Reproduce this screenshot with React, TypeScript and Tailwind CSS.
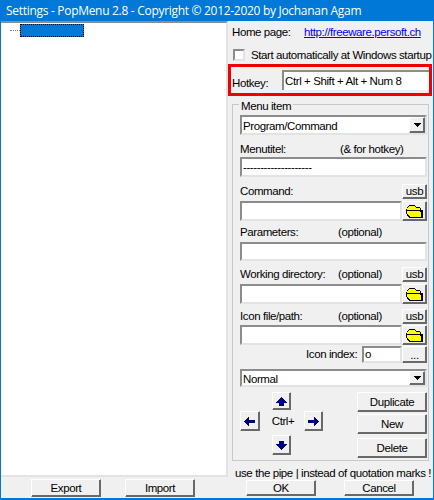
const raised =
  "border border-t-white border-l-white border-r-[#696969] border-b-[#696969] shadow-[inset_-1px_-1px_0_#696969] bg-[#f0f0f0] flex items-center justify-center";
const sunken =
  "border-2 border-t-[#8c8c8c] border-l-[#8c8c8c] border-r-[#e3e3e3] border-b-[#e3e3e3] bg-white";

function FolderIcon() {
  return (
    <svg width="17" height="13" viewBox="0 0 17 13" shapeRendering="crispEdges">
      <path d="M3 0h6v1h1v1h4v1h1v2h2v8H3v-1H2v-1H1V9H0V4h1V2h1V1h1z" fill="#000" />
      <path d="M3 1h6v1h1v1h4v2H1V3h1V2h1z" fill="#ffff00" />
      <path d="M1 6h13v1h1v5H4v-1H3v-1H2V9H1z" fill="#ffff00" />
    </svg>
  );
}

function Arrow({ dir }: { dir: "up" | "down" | "left" | "right" }) {
  if (dir === "up" || dir === "down") {
    return (
      <svg className={dir === "down" ? "rotate-180" : ""} width="11" height="9" viewBox="0 0 11 9" shapeRendering="crispEdges">
        <path d="M5 0h1v1h1v1h1v1h1v1h1v1h1v1H8v3H3V6H0V5h1V4h1V3h1V2h1V1h1z" fill="#000080" />
      </svg>
    );
  }
  return (
    <svg className={dir === "right" ? "rotate-180" : ""} width="11" height="9" viewBox="0 0 11 9" shapeRendering="crispEdges">
      <path d="M4 0h1v3h6v3H5v3H4V8H3V7H2V6H1V5H0V4h1V3h1V2h1V1h1z" fill="#000080" />
    </svg>
  );
}

function Caret() {
  return (
    <svg width="7" height="4" viewBox="0 0 7 4" shapeRendering="crispEdges">
      <path d="M0 0h7v1H6v1H5v1H4v1H3V3H2V2H1V1H0z" fill="#000" />
    </svg>
  );
}

function Select({ value, height }: { value: string; height: string }) {
  return (
    <div className={`${sunken} ${height} w-full flex items-center justify-between`}>
      <span className="pl-[1px] pt-[1px]">{value}</span>
      <div className={`${raised} w-[16px] h-full`}>
        <Caret />
      </div>
    </div>
  );
}

function Usb() {
  return <div className={`${raised} w-[25px] h-[15px] pb-[1px]`}>usb</div>;
}

function FileRow({ mt }: { mt: string }) {
  return (
    <div className={`flex ${mt}`}>
      <div className={`${sunken} h-[20px] w-[162px]`} />
      <div className={`${raised} w-[25px] h-[20px] shrink-0`}>
        <FolderIcon />
      </div>
    </div>
  );
}

function LabelRow({
  label,
  optional,
  usb,
  mt,
}: {
  label: string;
  optional?: boolean;
  usb?: boolean;
  mt: string;
}) {
  const offset = usb ? "pb-[1px]" : "pt-[1px]";
  return (
    <div className={`flex items-center h-[15px] ${mt}`}>
      <span className={`w-[98px] shrink-0 whitespace-nowrap ${offset}`}>{label}</span>
      {optional && <span className={`whitespace-nowrap ${offset}`}>(optional)</span>}
      {usb && (
        <div className="ml-auto">
          <Usb />
        </div>
      )}
    </div>
  );
}

function ActionButton({ label, mt }: { label: string; mt?: string }) {
  return <div className={`${raised} w-[70px] h-[20px] ${mt ?? ""}`}>{label}</div>;
}

function ArrowButton({ dir, className }: { dir: "up" | "down" | "left" | "right"; className?: string }) {
  return (
    <div className={`${raised} ${className ?? ""}`}>
      <Arrow dir={dir} />
    </div>
  );
}

export default function App() {
  return (
    <div className="w-[434px] h-[500px] overflow-hidden flex flex-col bg-[#f0f0f0] text-black text-[11.5px] tracking-[-0.4px] leading-[14px] font-['Liberation_Sans',Arial,sans-serif] border-b-2 border-[#0078d7]">
      <div className="h-[21px] shrink-0 bg-[#0078d7] text-white pl-[6px] text-[12px] tracking-[-0.3px] leading-[21px] font-['Open_Sans',sans-serif] whitespace-nowrap">
        Settings - PopMenu 2.8 - Copyright © 2012-2020 by Jochanan Agam
      </div>
      <div className="flex-1 min-h-0 flex border-l border-r border-[#0078d7]">
        <div className="w-[227px] shrink-0 flex flex-col">
          <div className="h-[456px] border-t-2 border-t-[#8c8c8c] border-b-2 border-b-[#e3e3e3] border-r-2 border-r-[#e3e3e3] bg-white pt-[1px] shrink-0">
            <div className="flex items-center pl-[9px]">
              <div className="w-[10px] border-t border-dotted border-[#808080]" />
              <div className="w-[64px] h-[13px] bg-[#0078d7] border border-dotted border-black" />
            </div>
          </div>
          <div className="flex pl-[30px] pt-[2px] gap-[24px]">
            <div className={`${raised} w-[70px] h-[18px]`}>Export</div>
            <div className={`${raised} w-[70px] h-[18px]`}>Import</div>
          </div>
        </div>

        <div className="flex-1 min-w-0 flex flex-col">
          <div className="flex items-center h-[16px] mt-[3px] ml-[4px] whitespace-nowrap">
            <span className="w-[72px] shrink-0">Home page:</span>
            <span className="text-[#0000ff] underline">http://freeware.persoft.ch</span>
          </div>
          <div className="flex items-center h-[14px] mt-[8px] ml-[5px] whitespace-nowrap">
            <div className={`${sunken} w-[12px] h-[12px] shrink-0`} />
            <span className="ml-[6px]">Start automatically at Windows startup</span>
          </div>
          <div className="h-[32px] mt-[2px] w-[204px] border-[3px] border-[#f00000] flex items-center">
            <span className="ml-[1px] mt-[6px] w-[50px] shrink-0">Hotkey:</span>
            <div className="flex-1 h-[20px] border-t-2 border-l-2 border-t-[#8c8c8c] border-l-[#8c8c8c] bg-white pl-[1px] pt-[1px] leading-[16px]">
              Ctrl + Shift + Alt + Num 8
            </div>
          </div>

          <div className="relative mt-[8px] ml-[4px] w-[197px] h-[357px] border border-[#c8c8c8] pt-[10px] pl-[7px] pr-[1px]">
            <span className="absolute -top-[6px] left-[6px] px-[2px] bg-[#f0f0f0]">Menu item</span>
            <Select value="Program/Command" height="h-[20px]" />

            <div className="flex h-[14px] mt-[6px] pt-[1px] whitespace-nowrap">
              <span className="w-[100px] shrink-0">Menutitel:</span>
              <span>(&amp; for hotkey)</span>
            </div>
            <div className={`${sunken} h-[20px] mt-[2px] leading-[16px] pl-[1px] overflow-hidden`}>
              --------------------
            </div>

            <LabelRow label="Command:" usb mt="mt-[7px]" />
            <FileRow mt="mt-[2px]" />

            <LabelRow label="Parameters:" optional mt="mt-[3px]" />
            <div className={`${sunken} h-[19px] mt-[3px]`} />

            <LabelRow label="Working directory:" optional usb mt="mt-[6px]" />
            <FileRow mt="mt-[2px]" />

            <LabelRow label="Icon file/path:" optional usb mt="mt-[5px]" />
            <FileRow mt="mt-[1px]" />

            <div className="flex items-center h-[17px] mt-[1px] whitespace-nowrap">
              <span className="ml-[66px] w-[56px] shrink-0 pb-[2px]">Icon index:</span>
              <div className={`${sunken} w-[40px] h-[17px] leading-[13px] pl-[1px] shrink-0`}>o</div>
              <div className={`${raised} w-[25px] h-[17px]`}>...</div>
            </div>

            <div className="mt-[6px]">
              <Select value="Normal" height="h-[18px]" />
            </div>

            <div className="flex justify-between mt-[5px]">
              <div className="w-[83px] h-[64px] flex flex-col">
                <ArrowButton dir="up" className="w-[19px] h-[18px] ml-[32px]" />
                <div className="flex items-center mt-[1px] h-[20px]">
                  <ArrowButton dir="left" className="w-[20px] h-[20px]" />
                  <span className="ml-[12px] w-[33px] whitespace-nowrap">Ctrl+</span>
                  <ArrowButton dir="right" className="w-[19px] h-[20px]" />
                </div>
                <ArrowButton dir="down" className="w-[19px] h-[20px] ml-[32px] mt-[4px]" />
              </div>
              <div className="flex flex-col">
                <ActionButton label="Duplicate" />
                <ActionButton label="New" mt="mt-[2px]" />
                <ActionButton label="Delete" mt="mt-[4px]" />
              </div>
            </div>
          </div>

          <div className="h-[14px] mt-[5px] ml-[7px] whitespace-nowrap">use the pipe | instead of quotation marks !</div>
          <div className="flex pl-[18px] gap-[28px]">
            <div className={`${raised} w-[70px] h-[16px]`}>OK</div>
            <div className={`${raised} w-[70px] h-[16px]`}>Cancel</div>
          </div>
        </div>
      </div>
    </div>
  );
}
